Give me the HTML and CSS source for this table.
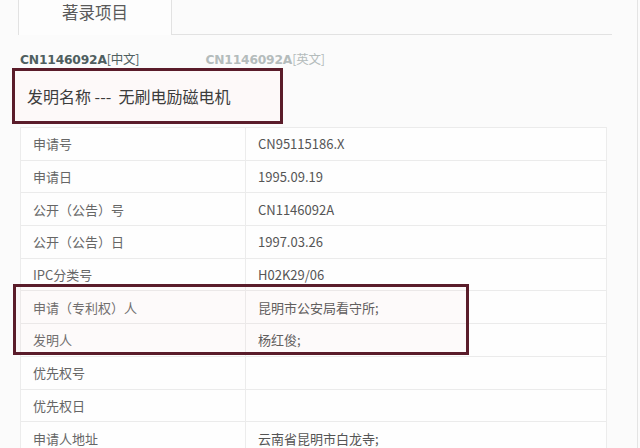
FILE: index.html
```html
<!DOCTYPE html>
<html lang="zh-CN">
<head>
    <meta charset="UTF-8">
    <title>著录项目</title>
    <link rel="stylesheet" href="styles.css">
</head>
<body>
    <div class="page">
        <div class="tabs">
            <div class="tab active">著录项目</div>
            <div class="tab-rest"></div>
        </div>

        <div class="versions">
            <span class="version current">CN1146092A<span class="lang">[中文]</span></span>
            <span class="version other">CN1146092A<span class="lang">[英文]</span></span>
        </div>

        <div class="title-box">发明名称&nbsp;---&nbsp;&nbsp;无刷电励磁电机</div>

        <div class="record">
            <table class="record-table">
                <tr><td class="label">申请号</td><td class="value">CN95115186.X</td></tr>
                <tr><td class="label">申请日</td><td class="value">1995.09.19</td></tr>
                <tr><td class="label">公开（公告）号</td><td class="value">CN1146092A</td></tr>
                <tr><td class="label">公开（公告）日</td><td class="value">1997.03.26</td></tr>
                <tr><td class="label">IPC分类号</td><td class="value">H02K29/06</td></tr>
                <tr><td class="label">申请（专利权）人</td><td class="value">昆明市公安局看守所;</td></tr>
                <tr><td class="label">发明人</td><td class="value">杨红俊;</td></tr>
                <tr><td class="label">优先权号</td><td class="value"></td></tr>
                <tr><td class="label">优先权日</td><td class="value"></td></tr>
                <tr><td class="label">申请人地址</td><td class="value">云南省昆明市白龙寺;</td></tr>
            </table>
            <!-- highlight drawn over the applicant / inventor rows -->
            <div class="highlight"></div>
        </div>
    </div>
</body>
</html>
```

FILE: styles.css
```css
* {
    margin: 0;
    padding: 0;
    box-sizing: border-box;
}

body {
    background: #fbfbfb;
    font-family: "Open Sans", "Noto Sans CJK SC", sans-serif;
    color: #555;
    width: 640px;
    height: 448px;
    overflow: hidden;
}

.page {
    width: 638px;
    height: 448px;
    border-right: 1px solid #e4e4e4;
}

.tabs {
    display: flex;
    height: 35px;
    padding-left: 18px;
}

.tab {
    width: 154px;
    border-left: 1px solid #e2e2e2;
    border-right: 1px solid #e2e2e2;
    background: #fdfdfd;
    text-align: center;
    font-size: 16.5px;
    line-height: 25px;
    color: #5a5a5a;
    font-family: "Noto Sans CJK SC", sans-serif;
}

.tab-rest {
    width: 440px;
    border-bottom: 1px solid #e2e2e2;
}

.versions {
    display: flex;
    gap: 66px;
    padding: 14px 0 0 20px;
    height: 33px;
    font-family: "DejaVu Sans", "Noto Sans CJK SC", sans-serif;
    font-size: 12.3px;
    line-height: 20px;
}

.version {
    letter-spacing: -0.2px;
}

.version.current {
    color: #4f5f60;
    font-weight: bold;
}

.version.other {
    color: #b4bcbc;
    font-weight: bold;
}

.lang {
    font-family: "Noto Sans CJK SC", sans-serif;
    font-weight: normal;
    font-size: 12.5px;
}

.title-box {
    margin: 0 0 0 12px;
    width: 271px;
    height: 56px;
    border: 3px solid #5a1c2a;
    background: #fdf9f9;
    padding-left: 12px;
    font-family: "Noto Sans CJK SC", sans-serif;
    font-size: 16px;
    line-height: 50px;
    color: #3c3c3c;
}

.record {
    position: relative;
    margin: 3px 0 0 20px;
    width: 587px;
}

.record-table {
    width: 100%;
    border-collapse: collapse;
    background: #fefefe;
    font-size: 13px;
}

.record-table td {
    height: 32.7px;
    border-top: 1px solid #ebebeb;
    vertical-align: middle;
    font-family: "Noto Sans CJK SC", sans-serif;
}

.record-table .label {
    width: 225px;
    padding-left: 12px;
    color: #666;
    border-left: 1px solid #ececec;
    border-right: 1px solid #ececec;
}

.record-table .value {
    padding-left: 12px;
    color: #555;
    border-right: 1px solid #ececec;
}

.highlight {
    position: absolute;
    left: -7px;
    top: 157px;
    width: 456px;
    height: 71px;
    border: 3px solid #5a1c2a;
    background: rgba(240, 200, 200, 0.08);
}
```
